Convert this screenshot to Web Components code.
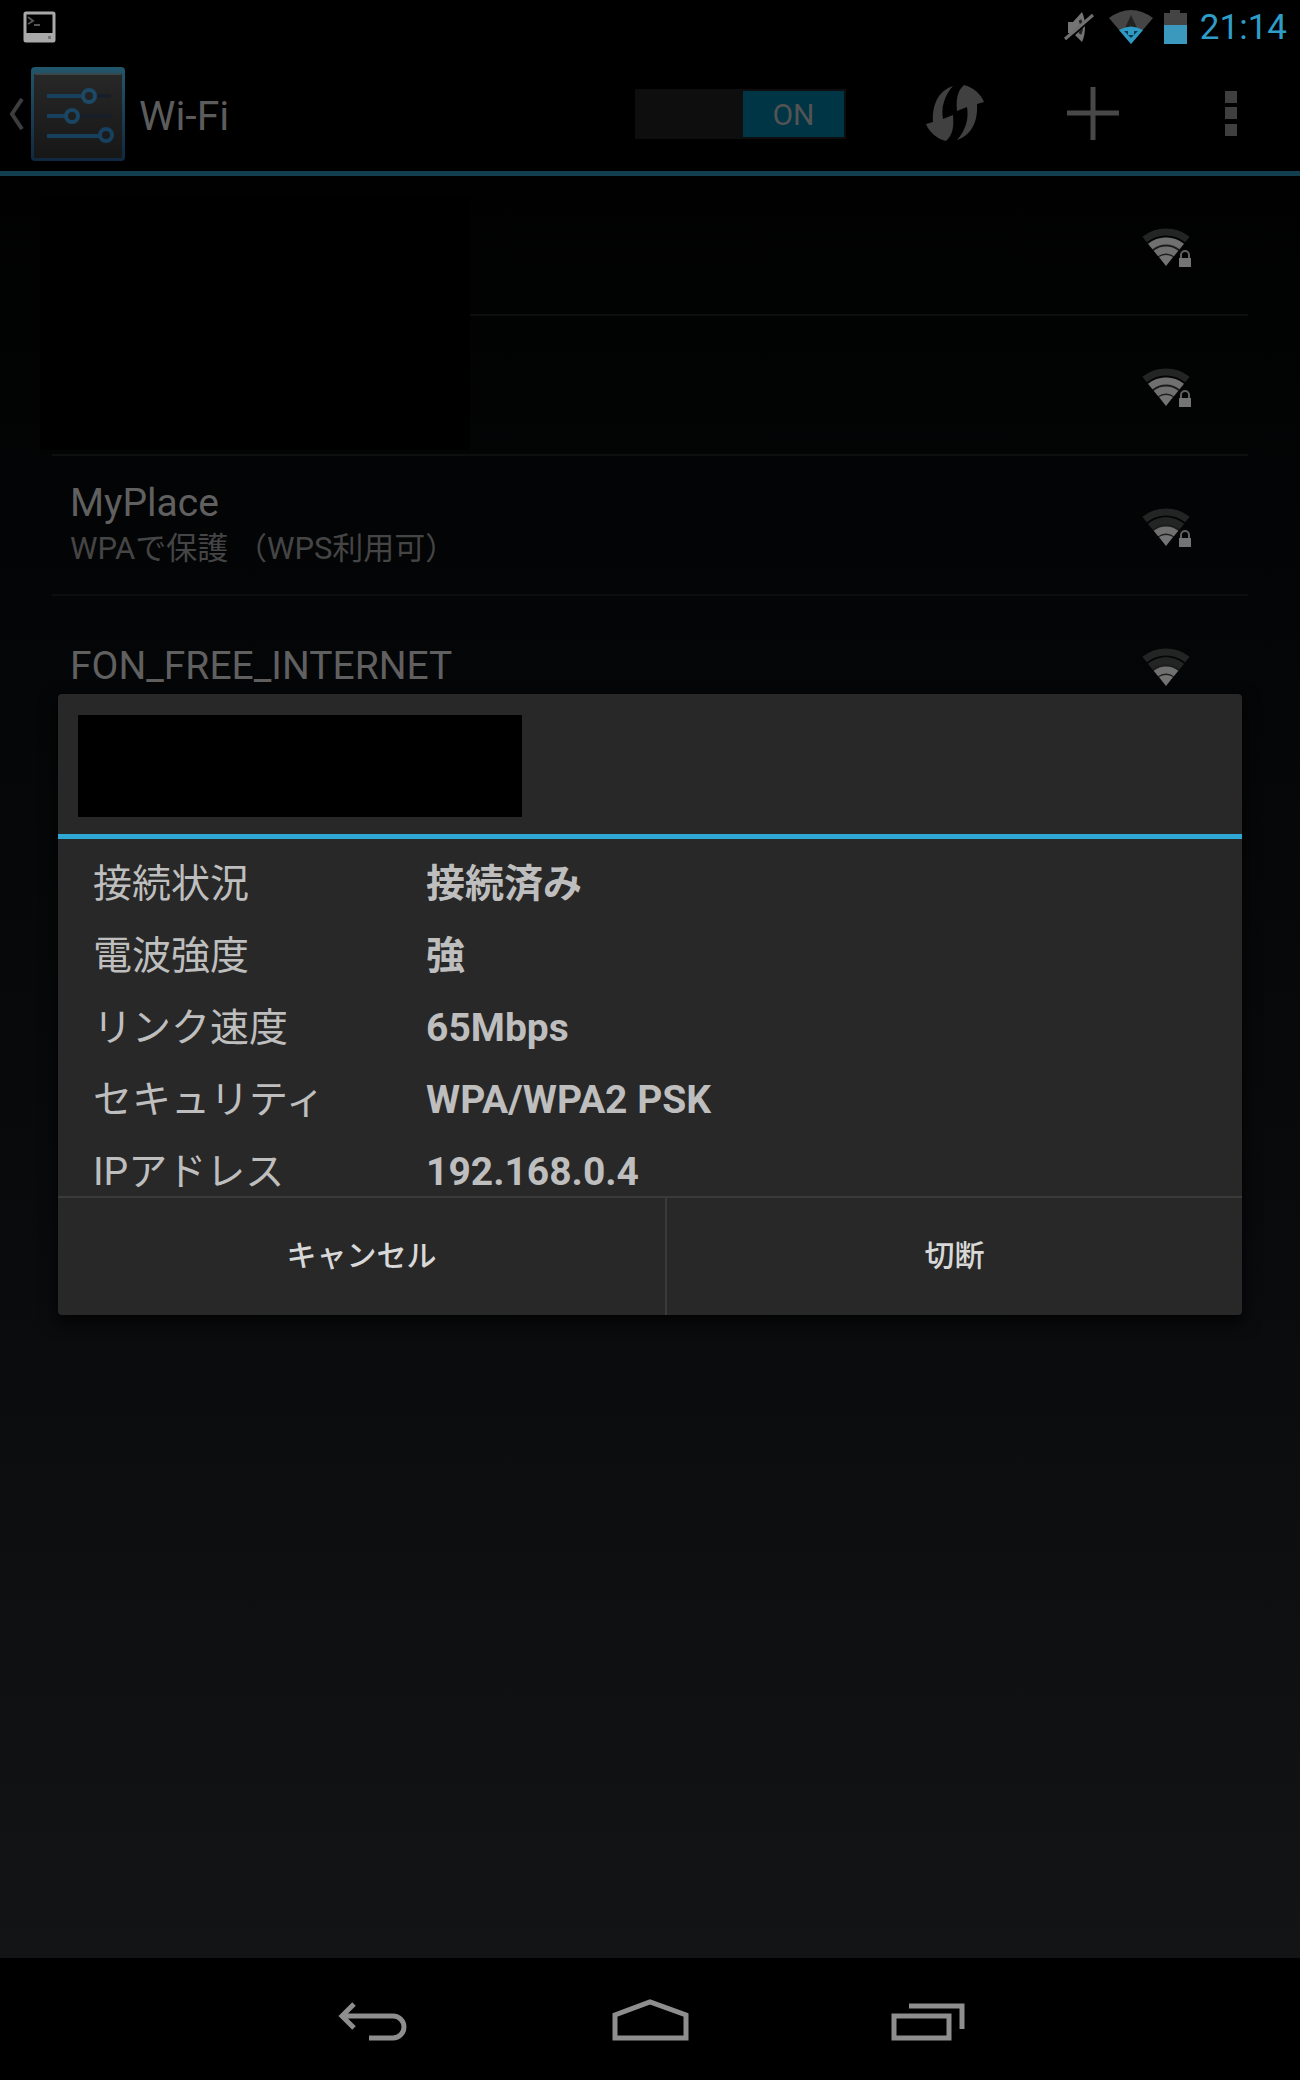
<!DOCTYPE html>
<html lang="ja">
<head>
<meta charset="utf-8">
<meta name="viewport" content="width=device-width, initial-scale=1">
<title>Wi-Fi</title>
<style>
  body {
    margin: 0;
    background: #000;
    font-family: Roboto, "Noto Sans CJK JP", sans-serif;
  }
</style>
</head>
<body>
<device-screen>
  <status-bar slot="status" time="21:14"></status-bar>
  <action-bar heading="Wi-Fi"></action-bar>
  <network-list>
    <network-item strength="3" secured></network-item>
    <network-item strength="3" secured></network-item>
    <network-item strength="2" secured>MyPlace<span slot="summary">WPAで保護 （WPS利用可）</span></network-item>
    <network-item strength="2">FON_FREE_INTERNET</network-item>
  </network-list>
  <network-dialog slot="dialog"></network-dialog>
  <nav-bar slot="nav"></nav-bar>
</device-screen>

<script>
class DeviceScreen extends HTMLElement {
  constructor() {
    super();
    this.attachShadow({ mode: 'open' });
    this.shadowRoot.innerHTML = `
      <style>
        :host {
          display: flex;
          flex-direction: column;
          min-height: 100vh;
          background: #000;
        }
        main {
          flex: 1;
          position: relative;
          background: linear-gradient(#000 0%, #040506 30%, #0a0b0d 65%, #121416 100%);
        }
        .overlay {
          position: absolute;
          inset: 0;
          display: flex;
          align-items: center;
          padding: 0 58px;
        }
      </style>
      <slot name="status"></slot>
      <main>
        <slot></slot>
        <div class="overlay"><slot name="dialog"></slot></div>
      </main>
      <slot name="nav"></slot>
    `;
  }
}

class StatusBar extends HTMLElement {
  constructor() {
    super();
    this.attachShadow({ mode: 'open' });
  }

  connectedCallback() {
    this.shadowRoot.innerHTML = `
      <style>
        :host {
          display: flex;
          align-items: center;
          box-sizing: border-box;
          height: 50px;
          padding: 4px 13px 0 23px;
          background: #000;
        }
        .spacer { flex: 1; }
        svg { display: block; }
        .mute { margin-right: 14px; }
        .wifi { margin-right: 11px; }
        .battery { margin-right: 13px; }
        time {
          padding-top: 2px;
          font-size: 35px;
          line-height: 44px;
          color: #2e9dc8;
        }
      </style>
      <svg width="33" height="32" viewBox="0 0 33 32">
        <rect x="2" y="2" width="29" height="28" rx="1" fill="none" stroke="#a9a9a9" stroke-width="3"/>
        <rect x="2" y="22" width="29" height="8" fill="#a9a9a9"/>
        <rect x="25" y="25" width="3" height="3" fill="#777"/>
        <path d="M5 6l5 4-5 3M11 14h6" fill="none" stroke="#555" stroke-width="2"/>
      </svg>
      <span class="spacer"></span>
      <svg class="mute" width="31" height="32" viewBox="0 0 31 32">
        <path d="M4 11h5L18 1c4 8 4 22 0 30L9 22H4z" fill="#747474"/>
        <path d="M16 9c2 4 2 10 0 14" fill="none" stroke="#222" stroke-width="3"/>
        <path d="M3 30L31 5" stroke="#000" stroke-width="2"/>
        <path d="M1 28L29 4" stroke="#707070" stroke-width="3"/>
      </svg>
      <svg class="wifi" width="44" height="34" viewBox="0 0 44 34">
        <path d="M22 34L0 8Q22-8 44 8z" fill="#454545"/>
        <path d="M22 5l6 13H16z" fill="#222"/>
        <path d="M22 34L10 20Q22 13 34 20z" fill="#2f9ac4"/>
        <path d="M15 21h4v4zM29 21h-4v4zM22 28l-3-3h6z" fill="#0b3c50"/>
      </svg>
      <svg class="battery" width="23" height="34" viewBox="0 0 23 34">
        <path d="M0 3h6V0h10v3h7v12H0z" fill="#444"/>
        <rect y="15" width="23" height="19" fill="#3b99be"/>
      </svg>
      <time>${this.getAttribute('time')}</time>
    `;
  }
}

class ActionBar extends HTMLElement {
  constructor() {
    super();
    this.attachShadow({ mode: 'open' });
  }

  connectedCallback() {
    this.shadowRoot.innerHTML = `
      <style>
        :host {
          display: flex;
          align-items: center;
          box-sizing: border-box;
          height: 126px;
          padding-top: 6px;
          border-bottom: 5px solid #123f4f;
          background: #000;
        }
        svg { display: block; }
        .up {
          display: flex;
          align-items: center;
          gap: 7px;
          padding-left: 9px;
        }
        h1 {
          flex: 1;
          margin: 0 0 0 14px;
          padding-top: 4px;
          font-size: 41px;
          line-height: 48px;
          font-weight: 400;
          color: #5c5c5c;
        }
        .switch {
          display: flex;
          justify-content: flex-end;
          box-sizing: border-box;
          width: 211px;
          height: 50px;
          margin-right: 40px;
          padding: 2px;
          background: #0e0e0e;
        }
        .switch input {
          position: absolute;
          opacity: 0;
        }
        .thumb {
          width: 101px;
          font-size: 30px;
          line-height: 48px;
          height: 46px;
          text-align: center;
          color: #535353;
          background: #003546;
        }
        button {
          display: flex;
          align-items: center;
          justify-content: center;
          width: 138px;
          height: 96px;
          padding: 0;
          border: 0;
          background: none;
        }
      </style>
      <a class="up" href="#" aria-label="設定">
        <svg width="15" height="32" viewBox="0 0 15 32">
          <path d="M13 1L3 16l10 15" fill="none" stroke="#3d3d3d" stroke-width="4"/>
        </svg>
        <svg width="94" height="94" viewBox="0 0 94 94">
          <defs>
            <linearGradient id="plate" x2="0" y2="1">
              <stop offset="0" stop-color="#272727"/>
              <stop offset="1" stop-color="#171717"/>
            </linearGradient>
            <linearGradient id="edge" x2="0" y2="1">
              <stop offset="0" stop-color="#22566a"/>
              <stop offset="1" stop-color="#10283f"/>
            </linearGradient>
          </defs>
          <rect width="94" height="94" rx="4" fill="url(#edge)"/>
          <rect x="3" y="7" width="88" height="84" fill="url(#plate)"/>
          <path d="M4 7h86" stroke="#3a464a" stroke-width="2"/>
          <g fill="none" stroke-width="4">
            <path d="M64 29h16M48 49h32" stroke="#151f2b" stroke-width="3"/>
            <path d="M16 29h36M16 49h19M16 69h53" stroke="#173f5e"/>
            <circle cx="58" cy="29" r="6" stroke="#1c4966"/>
            <circle cx="41" cy="49" r="6" stroke="#1a4563"/>
            <circle cx="75" cy="68" r="6" stroke="#173f5e"/>
          </g>
        </svg>
      </a>
      <h1>${this.getAttribute('heading')}</h1>
      <label class="switch">
        <input type="checkbox" role="switch" aria-label="Wi-Fi" checked>
        <span class="thumb">ON</span>
      </label>
      <button aria-label="WPS">
        <svg width="59" height="59" viewBox="0 0 59 59" fill="#404040">
          <path id="half" d="M27 2C12 7 6 21 7 38L0 40c3 8 11 15 20 17 7-6 8-15 7-26l-10 4c-2-11 1-23 10-33z"/>
          <use href="#half" transform="rotate(180 29 29)"/>
        </svg>
      </button>
      <button aria-label="ネットワークを追加">
        <svg width="52" height="53" viewBox="0 0 52 53">
          <path d="M0 26h52M26 0v53" stroke="#484848" stroke-width="5"/>
        </svg>
      </button>
      <button aria-label="その他">
        <svg width="12" height="45" viewBox="0 0 12 45">
          <path d="M0 0h12v12H0zM0 16h12v12H0zM0 33h12v12H0z" fill="#3f3f3f"/>
        </svg>
      </button>
    `;
  }
}

class NetworkList extends HTMLElement {
  constructor() {
    super();
    this.attachShadow({ mode: 'open' });
    // the mask lies over the names of the first two networks
    this.shadowRoot.innerHTML = `
      <style>
        :host {
          display: block;
          position: relative;
          padding: 0 52px;
        }
        .mask {
          position: absolute;
          left: 40px;
          top: 20px;
          width: 430px;
          height: 254px;
          background: #000;
        }
      </style>
      <slot></slot>
      <div class="mask"></div>
    `;
  }
}

class NetworkItem extends HTMLElement {
  constructor() {
    super();
    this.attachShadow({ mode: 'open' });
  }

  connectedCallback() {
    this.shadowRoot.innerHTML = `
      <style>
        :host {
          display: flex;
          align-items: center;
          box-sizing: border-box;
          height: 140px;
          padding: 2px 56px 0 18px;
          border-bottom: 2px solid #0d0e0e;
        }
        :host(:last-of-type) { border-bottom-color: transparent; }
        .text { flex: 1; }
        .name {
          font-size: 39px;
          line-height: 46px;
          color: #606060;
        }
        .summary {
          font-size: 31px;
          line-height: 46px;
          color: #454545;
        }
        svg { display: block; }
      </style>
      <div class="text">
        <div class="name"><slot></slot></div>
        <div class="summary"><slot name="summary"></slot></div>
      </div>
      ${this.signal()}
    `;
  }

  signal() {
    const strength = Number(this.getAttribute('strength'));
    const arcs = [[16, 2], [25, 3], [34, 4]].map(([r, level]) => {
      const dx = r * 0.63;
      const y = 41 - r * 0.777;
      const color = level <= strength ? '#707070' : '#232424';
      return `<path d="M${24 - dx} ${y}A${r} ${r} 0 0 1 ${24 + dx} ${y}" stroke="${color}"/>`;
    }).join('');
    const lock = `
      <path d="M39 34v-4a4 4 0 0 1 8 0v4" fill="none" stroke="#606060" stroke-width="2"/>
      <rect x="37" y="33" width="12" height="9" fill="#747474"/>
    `;
    return `
      <svg width="50" height="42" viewBox="0 0 50 42">
        <path d="M24 41L6 19Q24 5 42 19z" fill="#1c1c1c"/>
        <path d="M24 41l-7-9q7-4 14 0z" fill="#747474"/>
        <g fill="none" stroke-width="7">${arcs}</g>
        ${this.hasAttribute('secured') ? lock : ''}
      </svg>
    `;
  }
}

class NetworkDialog extends HTMLElement {
  constructor() {
    super();
    this.attachShadow({ mode: 'open' });
    const rows = [
      ['接続状況', '接続済み'],
      ['電波強度', '強'],
      ['リンク速度', '65Mbps'],
      ['セキュリティ', 'WPA/WPA2 PSK'],
      ['IPアドレス', '192.168.0.4'],
    ];
    this.shadowRoot.innerHTML = `
      <style>
        :host {
          display: block;
          flex: 1;
          border-radius: 4px;
          overflow: hidden;
          background: #282828;
          box-shadow: 0 6px 16px 2px rgba(0, 0, 0, .7);
        }
        header {
          padding: 21px 20px 17px;
          border-bottom: 5px solid #30a8d5;
        }
        .mask {
          width: 444px;
          height: 102px;
          background: #000;
        }
        .body {
          box-sizing: border-box;
          height: 357px;
          padding: 9px 35px 0;
          overflow: hidden;
        }
        table {
          width: 100%;
          border-collapse: collapse;
          font-size: 39px;
          line-height: 72px;
          color: #bebebe;
        }
        th, td {
          height: 72px;
          padding: 0;
          text-align: left;
          white-space: nowrap;
        }
        th {
          width: 333px;
          font-weight: 400;
        }
        td { font-weight: 700; }
        footer {
          display: flex;
          border-top: 2px solid #3a3a3a;
        }
        button {
          flex: 575;
          height: 117px;
          padding: 0;
          border: 0;
          font: 500 30px/42px Roboto, "Noto Sans CJK JP", sans-serif;
          color: #d8d8d8;
          background: none;
        }
        button:first-child {
          flex: 607;
          border-right: 2px solid #3a3a3a;
        }
      </style>
      <section role="dialog" aria-label="ネットワークの詳細">
        <header><div class="mask"></div></header>
        <div class="body">
          <table>
            ${rows.map(([label, value]) => `<tr><th scope="row">${label}</th><td>${value}</td></tr>`).join('')}
          </table>
        </div>
        <footer>
          <button>キャンセル</button>
          <button>切断</button>
        </footer>
      </section>
    `;
  }
}

class NavBar extends HTMLElement {
  constructor() {
    super();
    this.attachShadow({ mode: 'open' });
    this.shadowRoot.innerHTML = `
      <style>
        :host {
          display: flex;
          justify-content: center;
          height: 122px;
          background: #000;
        }
        button {
          display: flex;
          align-items: center;
          justify-content: center;
          width: 278px;
          padding: 2px 0 0;
          border: 0;
          background: none;
        }
        svg {
          display: block;
          fill: none;
          stroke: #8e8e8e;
          stroke-width: 5;
        }
      </style>
      <button aria-label="戻る">
        <svg width="70" height="42" viewBox="0 0 70 42">
          <path d="M5 17h51a11 11 0 0 1 0 22H32M17 5L5 17l12 12"/>
        </svg>
      </button>
      <button aria-label="ホーム">
        <svg width="77" height="42" viewBox="0 0 77 42">
          <path d="M3 39V16L38 3l36 13v23z"/>
        </svg>
      </button>
      <button aria-label="最近使ったアプリ">
        <svg width="74" height="42" viewBox="0 0 74 42">
          <path d="M3 17h55v22H3zM18 7h53v23"/>
        </svg>
      </button>
    `;
  }
}

customElements.define('device-screen', DeviceScreen);
customElements.define('status-bar', StatusBar);
customElements.define('action-bar', ActionBar);
customElements.define('network-list', NetworkList);
customElements.define('network-item', NetworkItem);
customElements.define('network-dialog', NetworkDialog);
customElements.define('nav-bar', NavBar);
</script>
</body>
</html>
